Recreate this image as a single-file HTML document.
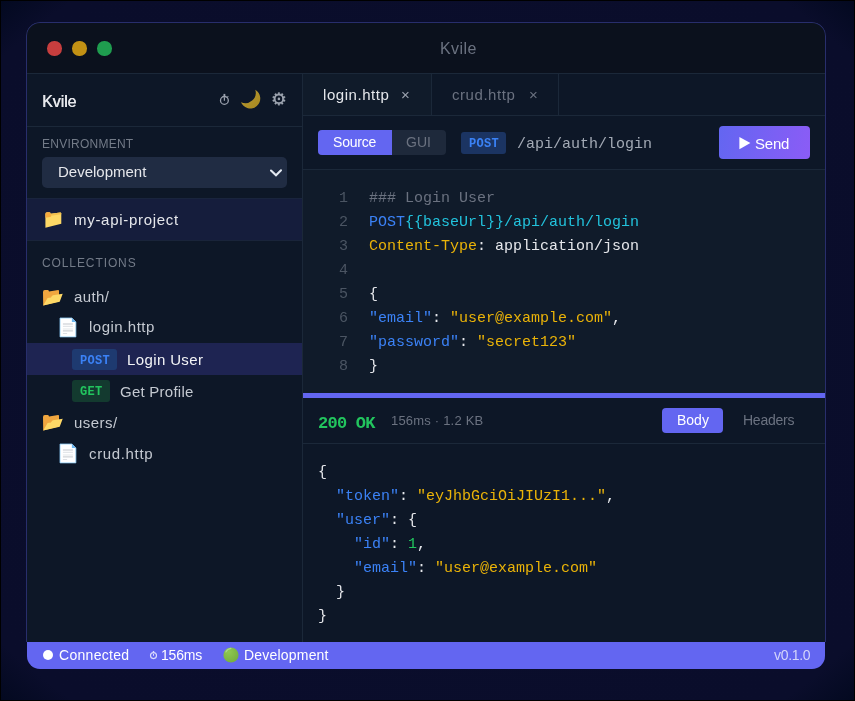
<!DOCTYPE html>
<html><head><meta charset="utf-8">
<style>
*{margin:0;padding:0;box-sizing:border-box}
html,body{width:855px;height:701px;overflow:hidden;background:#000}
body{position:relative;font-family:"Liberation Sans",sans-serif}
#bg{position:absolute;left:1px;top:1px;width:853px;height:699px;background:radial-gradient(ellipse farthest-corner at 50% 50%,#0b0e2c 0%,#0a0d2b 92%,#030920 100%)}
#win{position:absolute;left:26px;top:22px;width:800px;height:648px;border-radius:14px;overflow:hidden}
.r{position:absolute}
.t{position:absolute;white-space:pre;line-height:1;will-change:transform}
</style></head><body>
<div id="bg"></div>
<div id="win">
<div class="r" style="left:0.0px;top:0.0px;width:800.0px;height:51.0px;background:#0b111d;"></div>
<div class="r" style="left:0.0px;top:51.0px;width:800.0px;height:1.0px;background:#1b2839;"></div>
<div class="r" style="left:21.2px;top:19.4px;width:14.4px;height:14.4px;background:#c73e3e;border-radius:50%"></div>
<div class="r" style="left:46.2px;top:19.4px;width:14.4px;height:14.4px;background:#c29114;border-radius:50%"></div>
<div class="r" style="left:71.2px;top:19.4px;width:14.4px;height:14.4px;background:#1f9d4f;border-radius:50%"></div>
<div class="t" style="left:414.3px;top:19.3px;font-size:16px;color:#6b7280;font-family:'Liberation Sans',sans-serif;letter-spacing:0.4px">Kvile</div>
<div class="r" style="left:1.0px;top:52.0px;width:798.0px;height:568.0px;background:#0d1727;"></div>
<div class="r" style="left:277.0px;top:52.0px;width:128.0px;height:41.0px;background:#101b2a;"></div>
<div class="r" style="left:277.0px;top:148.0px;width:522.0px;height:223.0px;background:#101b2a;"></div>
<div class="r" style="left:276.0px;top:52.0px;width:1.0px;height:568.0px;background:#1b2839;"></div>
<div class="r" style="left:0.0px;top:104.0px;width:276.0px;height:1.0px;background:#1b2839;"></div>
<div class="t" style="left:16.0px;top:71.6px;font-size:16px;color:#e5e7eb;font-family:'Liberation Sans',sans-serif;letter-spacing:-0.1px;text-shadow:0.45px 0 0 #e5e7eb">Kvile</div>
<svg class="r" style="left:190px;top:68px" width="16" height="18" viewBox="216 90 16 18"><circle cx="224.4" cy="100.4" r="3.9" fill="none" stroke="#9ca3af" stroke-width="1.3"/><rect x="223.5" y="93.9" width="1.8" height="2.2" fill="#9ca3af"/><line x1="224.4" y1="100.7" x2="224.4" y2="97.3" stroke="#9ca3af" stroke-width="1.2"/><line x1="227.2" y1="97.3" x2="228.3" y2="96.3" stroke="#9ca3af" stroke-width="1.1"/></svg>
<svg class="r" style="left:210px;top:64px" width="30" height="26" viewBox="236 86 30 26"><defs><linearGradient id="mg" x1="0" y1="0" x2="1" y2="1"><stop offset="0" stop-color="#b99b33"/><stop offset="1" stop-color="#a5871f"/></linearGradient></defs><path d="M255.3 90.5 A10 10 0 1 1 241 102.9 A10.4 10.4 0 0 0 255.3 90.5 Z" fill="url(#mg)" transform="translate(0,-0.7)"/></svg>
<svg class="r" style="left:244px;top:68px" width="20" height="20" viewBox="270 90 20 20"><polygon points="277.96,93.99 278.20,92.54 279.60,92.54 279.84,93.99 281.02,94.37 282.07,93.34 283.21,94.17 282.55,95.48 283.28,96.48 284.73,96.27 285.17,97.60 283.86,98.28 283.86,99.52 285.17,100.20 284.73,101.53 283.28,101.32 282.55,102.32 283.21,103.63 282.07,104.46 281.02,103.43 279.84,103.81 279.60,105.26 278.20,105.26 277.96,103.81 276.78,103.43 275.73,104.46 274.59,103.63 275.25,102.32 274.52,101.32 273.07,101.53 272.63,100.20 273.94,99.52 273.94,98.28 272.63,97.60 273.07,96.27 274.52,96.48 275.25,95.48 274.59,94.17 275.73,93.34 276.78,94.37" fill="#9ca3af" stroke="#9ca3af" stroke-width="0.4" stroke-linejoin="round"/><circle cx="278.9" cy="98.9" r="3.3" fill="#0d1727"/><circle cx="278.9" cy="98.9" r="1.3" fill="#9ca3af"/></svg>
<div class="t" style="left:16.0px;top:116.3px;font-size:12px;color:#737b88;font-family:'Liberation Sans',sans-serif;letter-spacing:0.25px">ENVIRONMENT</div>
<div class="r" style="left:16.4px;top:135.2px;width:244.2px;height:30.8px;background:#202c43;border-radius:5px"></div>
<div class="t" style="left:31.8px;top:142.2px;font-size:15px;color:#e5e7eb;font-family:'Liberation Sans',sans-serif">Development</div>
<svg class="r" style="left:240px;top:144px" width="20" height="14" viewBox="240 144 20 14"><polyline points="245,148.5 250,153.3 255,148.3" fill="none" stroke="#e2e8f0" stroke-width="2.1" stroke-linecap="round" stroke-linejoin="miter"/></svg>
<div class="r" style="left:0.0px;top:176.0px;width:276.0px;height:43.0px;background:#151d3c;"></div>
<div class="r" style="left:0.0px;top:176.0px;width:276.0px;height:1.0px;background:#19243d;"></div>
<div class="r" style="left:0.0px;top:218.0px;width:276.0px;height:1.0px;background:#19243a;"></div>
<svg class="r" style="left:17.7px;top:189.3px" width="19" height="18" viewBox="43.7 211.3 19 18"><path d="M45.1 214.4 Q45.1 212.5 46.8 212.5 L49.2 212.5 Q50.3 212.5 50.4 214 L59.8 212.7 Q61 212.6 61 213.8 L61 224.1 L45.1 228 Z" fill="#fdd866"/><path d="M45.1 214.4 Q45.1 212.5 46.8 212.5 L49.2 212.5 Q50.3 212.5 50.4 214 L51 216.5 Q50 217.6 48 217.6 L45.1 218 Z" fill="#f6aa3e"/><path d="M50.4 214 L59.8 212.7 Q61 212.6 61 213.8 L61 214.6 L50.6 216 Z" fill="#f2bf4e"/></svg>
<div class="t" style="left:47.6px;top:189.6px;font-size:15px;color:#e5e7eb;font-family:'Liberation Sans',sans-serif;letter-spacing:0.7px">my-api-project</div>
<div class="t" style="left:16.0px;top:235.2px;font-size:12px;color:#737b88;font-family:'Liberation Sans',sans-serif;letter-spacing:0.9px">COLLECTIONS</div>
<svg class="r" style="left:16.2px;top:266.5px" width="22" height="18" viewBox="42.2 288.5 22 18"><path d="M43.2 291.5 Q43.2 289.5 45 289.5 L48.2 289.5 Q49 289.5 49.2 291.1 L58.3 289.6 Q59.2 289.5 59.2 290.5 L59.2 301 L43.4 305 Z" fill="#f0a63f"/><path d="M47.8 297.4 L51.2 296.9 Q52 295 53.2 294.7 L62.9 293.2 L59.9 301.2 L43.4 305 Z" fill="#fdd866"/></svg>
<div class="t" style="left:48.1px;top:267.2px;font-size:15px;color:#c4c9d1;font-family:'Liberation Sans',sans-serif;letter-spacing:0.4px">auth/</div>
<svg class="r" style="left:33.1px;top:294.5px" width="19" height="22" viewBox="59.1 316.5 19 22"><path d="M60.1 317.5 L72 317.5 L76 321.4 L76 336.4 L60.1 336.4 Z" fill="#ffffff" stroke="#8ccaf5" stroke-width="0.8"/><path d="M72 317.5 L76 321.4 L72 321.4 Z" fill="#6cb6ee"/><rect x="63" y="323" width="10" height="1" fill="#c3c8ce"/><rect x="63" y="325.3" width="10" height="1" fill="#dde0e4"/><rect x="63" y="328.1" width="10" height="0.8" fill="#dde0e4"/><rect x="63" y="329.9" width="10" height="1" fill="#c3c8ce"/><rect x="63" y="332.5" width="4.2" height="1" fill="#dde0e4"/></svg>
<div class="t" style="left:62.7px;top:297.3px;font-size:15px;color:#c4c9d1;font-family:'Liberation Sans',sans-serif;letter-spacing:0.5px">login.http</div>
<div class="r" style="left:0.0px;top:321.0px;width:276.0px;height:32.0px;background:#1e2452;"></div>
<div class="r" style="left:46.2px;top:326.8px;width:44.5px;height:21.2px;background:#1e3a70;border-radius:3px"></div>
<div class="t" style="left:53.9px;top:332.7px;font-size:12px;color:#3b82f6;font-family:'Liberation Mono',monospace;font-weight:700;letter-spacing:0.3px">POST</div>
<div class="t" style="left:101.0px;top:330.1px;font-size:15px;color:#f3f4f6;font-family:'Liberation Sans',sans-serif;letter-spacing:0.38px">Login User</div>
<div class="r" style="left:46.2px;top:358.2px;width:37.6px;height:21.9px;background:#133a2f;border-radius:3px"></div>
<div class="t" style="left:53.9px;top:364.4px;font-size:12px;color:#22c55e;font-family:'Liberation Mono',monospace;font-weight:700;letter-spacing:0.3px">GET</div>
<div class="t" style="left:93.5px;top:362.2px;font-size:15px;color:#c4c9d1;font-family:'Liberation Sans',sans-serif;letter-spacing:0.25px">Get Profile</div>
<svg class="r" style="left:16.2px;top:391.6px" width="22" height="18" viewBox="42.2 288.5 22 18"><path d="M43.2 291.5 Q43.2 289.5 45 289.5 L48.2 289.5 Q49 289.5 49.2 291.1 L58.3 289.6 Q59.2 289.5 59.2 290.5 L59.2 301 L43.4 305 Z" fill="#f0a63f"/><path d="M47.8 297.4 L51.2 296.9 Q52 295 53.2 294.7 L62.9 293.2 L59.9 301.2 L43.4 305 Z" fill="#fdd866"/></svg>
<div class="t" style="left:47.6px;top:393.3px;font-size:15px;color:#c4c9d1;font-family:'Liberation Sans',sans-serif;letter-spacing:0.45px">users/</div>
<svg class="r" style="left:33.1px;top:421.0px" width="19" height="22" viewBox="59.1 316.5 19 22"><path d="M60.1 317.5 L72 317.5 L76 321.4 L76 336.4 L60.1 336.4 Z" fill="#ffffff" stroke="#8ccaf5" stroke-width="0.8"/><path d="M72 317.5 L76 321.4 L72 321.4 Z" fill="#6cb6ee"/><rect x="63" y="323" width="10" height="1" fill="#c3c8ce"/><rect x="63" y="325.3" width="10" height="1" fill="#dde0e4"/><rect x="63" y="328.1" width="10" height="0.8" fill="#dde0e4"/><rect x="63" y="329.9" width="10" height="1" fill="#c3c8ce"/><rect x="63" y="332.5" width="4.2" height="1" fill="#dde0e4"/></svg>
<div class="t" style="left:62.7px;top:424.4px;font-size:15px;color:#c4c9d1;font-family:'Liberation Sans',sans-serif;letter-spacing:0.65px">crud.http</div>
<div class="r" style="left:277.0px;top:93.0px;width:523.0px;height:1.0px;background:#1b2839;"></div>
<div class="r" style="left:405.0px;top:52.0px;width:1.0px;height:41.0px;background:#1b2839;"></div>
<div class="r" style="left:532.0px;top:52.0px;width:1.0px;height:41.0px;background:#1b2839;"></div>
<div class="t" style="left:297.2px;top:65.3px;font-size:15px;color:#e5e7eb;font-family:'Liberation Sans',sans-serif;letter-spacing:0.55px">login.http</div>
<div class="t" style="left:375.2px;top:64.5px;font-size:15px;color:#9ca3af;font-family:'Liberation Sans',sans-serif">×</div>
<div class="t" style="left:426.2px;top:65.3px;font-size:15px;color:#6b7280;font-family:'Liberation Sans',sans-serif;letter-spacing:0.55px">crud.http</div>
<div class="t" style="left:502.6px;top:64.5px;font-size:15px;color:#6b7280;font-family:'Liberation Sans',sans-serif">×</div>
<div class="r" style="left:277.0px;top:147.0px;width:523.0px;height:1.0px;background:#1b2839;"></div>
<div class="r" style="left:292.0px;top:108.0px;width:128.0px;height:25.0px;background:#1e293b;border-radius:4px"></div>
<div class="r" style="left:292.0px;top:108.0px;width:74.0px;height:25.0px;background:#6366f1;border-radius:4px 0 0 4px"></div>
<div class="t" style="left:306.8px;top:113.2px;font-size:14px;color:#ffffff;font-family:'Liberation Sans',sans-serif;letter-spacing:-0.2px">Source</div>
<div class="t" style="left:380.3px;top:113.2px;font-size:14px;color:#6b7280;font-family:'Liberation Sans',sans-serif">GUI</div>
<div class="r" style="left:435.0px;top:110.4px;width:45.0px;height:21.3px;background:#1b3462;border-radius:3px"></div>
<div class="t" style="left:442.8px;top:115.8px;font-size:12px;color:#3b82f6;font-family:'Liberation Mono',monospace;font-weight:700;letter-spacing:0.3px">POST</div>
<div class="t" style="left:490.6px;top:115.3px;font-size:15px;color:#a3aab5;font-family:'Liberation Mono',monospace">/api/auth/login</div>
<div class="r" style="left:693.0px;top:104.0px;width:91.0px;height:33.0px;background:linear-gradient(100deg,#6366f1,#8b5cf6);border-radius:4px"></div>
<svg class="r" style="left:712px;top:112px" width="14" height="16" viewBox="738 134 14 16"><path d="M739.4 137 L750.4 143.1 L739.4 149.2 Z" fill="#ffffff"/></svg>
<div class="t" style="left:729.2px;top:113.5px;font-size:15px;color:#ffffff;font-family:'Liberation Sans',sans-serif;letter-spacing:-0.2px">Send</div>
<div class="t" style="left:313.0px;top:168.7px;font-size:15px;color:#4b5563;font-family:'Liberation Mono',monospace">1</div>
<div class="t" style="left:343.0px;top:168.7px;font-size:15px;color:#e5e7eb;font-family:'Liberation Mono',monospace"><span style="color:#6b7280">### Login User</span></div>
<div class="t" style="left:313.0px;top:192.7px;font-size:15px;color:#4b5563;font-family:'Liberation Mono',monospace">2</div>
<div class="t" style="left:343.0px;top:192.7px;font-size:15px;color:#e5e7eb;font-family:'Liberation Mono',monospace"><span style="color:#3b82f6">POST</span><span style="color:#22c3dd">{{baseUrl}}/api/auth/login</span></div>
<div class="t" style="left:313.0px;top:216.7px;font-size:15px;color:#4b5563;font-family:'Liberation Mono',monospace">3</div>
<div class="t" style="left:343.0px;top:216.7px;font-size:15px;color:#e5e7eb;font-family:'Liberation Mono',monospace"><span style="color:#eab308">Content-Type</span><span style="color:#e5e7eb">: application/json</span></div>
<div class="t" style="left:313.0px;top:240.7px;font-size:15px;color:#4b5563;font-family:'Liberation Mono',monospace">4</div>
<div class="t" style="left:343.0px;top:240.7px;font-size:15px;color:#e5e7eb;font-family:'Liberation Mono',monospace"></div>
<div class="t" style="left:313.0px;top:264.7px;font-size:15px;color:#4b5563;font-family:'Liberation Mono',monospace">5</div>
<div class="t" style="left:343.0px;top:264.7px;font-size:15px;color:#e5e7eb;font-family:'Liberation Mono',monospace"><span style="color:#e5e7eb">{</span></div>
<div class="t" style="left:313.0px;top:288.7px;font-size:15px;color:#4b5563;font-family:'Liberation Mono',monospace">6</div>
<div class="t" style="left:343.0px;top:288.7px;font-size:15px;color:#e5e7eb;font-family:'Liberation Mono',monospace"><span style="color:#3b82f6">"email"</span><span style="color:#e5e7eb">: </span><span style="color:#eab308">"user@example.com"</span><span style="color:#e5e7eb">,</span></div>
<div class="t" style="left:313.0px;top:312.7px;font-size:15px;color:#4b5563;font-family:'Liberation Mono',monospace">7</div>
<div class="t" style="left:343.0px;top:312.7px;font-size:15px;color:#e5e7eb;font-family:'Liberation Mono',monospace"><span style="color:#3b82f6">"password"</span><span style="color:#e5e7eb">: </span><span style="color:#eab308">"secret123"</span></div>
<div class="t" style="left:313.0px;top:336.7px;font-size:15px;color:#4b5563;font-family:'Liberation Mono',monospace">8</div>
<div class="t" style="left:343.0px;top:336.7px;font-size:15px;color:#e5e7eb;font-family:'Liberation Mono',monospace"><span style="color:#e5e7eb">}</span></div>
<div class="r" style="left:277.0px;top:371.0px;width:523.0px;height:5.0px;background:#6366f1;"></div>
<div class="t" style="left:292.3px;top:392.8px;font-size:17px;color:#22c55e;font-family:'Liberation Mono',monospace;font-weight:700;letter-spacing:-0.75px">200 OK</div>
<div class="t" style="left:365.2px;top:391.6px;font-size:13px;color:#6b7280;font-family:'Liberation Sans',sans-serif;letter-spacing:0.2px">156ms · 1.2 KB</div>
<div class="r" style="left:636.2px;top:386.0px;width:60.8px;height:25.3px;background:#6366f1;border-radius:4px"></div>
<div class="t" style="left:650.5px;top:391.1px;font-size:14px;color:#ffffff;font-family:'Liberation Sans',sans-serif">Body</div>
<div class="t" style="left:717.1px;top:391.1px;font-size:14px;color:#6b7280;font-family:'Liberation Sans',sans-serif;letter-spacing:-0.25px">Headers</div>
<div class="r" style="left:277.0px;top:421.0px;width:523.0px;height:1.0px;background:#1b2839;"></div>
<div class="t" style="left:291.6px;top:442.5px;font-size:15px;color:#e5e7eb;font-family:'Liberation Mono',monospace"><span style="color:#e5e7eb">{</span></div>
<div class="t" style="left:291.6px;top:466.5px;font-size:15px;color:#e5e7eb;font-family:'Liberation Mono',monospace"><span style="color:#e5e7eb">  </span><span style="color:#3b82f6">"token"</span><span style="color:#e5e7eb">: </span><span style="color:#eab308">"eyJhbGciOiJIUzI1..."</span><span style="color:#e5e7eb">,</span></div>
<div class="t" style="left:291.6px;top:490.5px;font-size:15px;color:#e5e7eb;font-family:'Liberation Mono',monospace"><span style="color:#e5e7eb">  </span><span style="color:#3b82f6">"user"</span><span style="color:#e5e7eb">: {</span></div>
<div class="t" style="left:291.6px;top:514.5px;font-size:15px;color:#e5e7eb;font-family:'Liberation Mono',monospace"><span style="color:#e5e7eb">    </span><span style="color:#3b82f6">"id"</span><span style="color:#e5e7eb">: </span><span style="color:#22c55e">1</span><span style="color:#e5e7eb">,</span></div>
<div class="t" style="left:291.6px;top:538.5px;font-size:15px;color:#e5e7eb;font-family:'Liberation Mono',monospace"><span style="color:#e5e7eb">    </span><span style="color:#3b82f6">"email"</span><span style="color:#e5e7eb">: </span><span style="color:#eab308">"user@example.com"</span></div>
<div class="t" style="left:291.6px;top:562.5px;font-size:15px;color:#e5e7eb;font-family:'Liberation Mono',monospace"><span style="color:#e5e7eb">  }</span></div>
<div class="t" style="left:291.6px;top:586.5px;font-size:15px;color:#e5e7eb;font-family:'Liberation Mono',monospace"><span style="color:#e5e7eb">}</span></div>
<div class="r" style="left:0;top:0;width:800px;height:620px;border:1px solid #282e6c;border-bottom:none;border-radius:14px 14px 0 0"></div>
<div class="r" style="left:1px;top:620px;width:798px;height:27px;background:#6366f1;border-radius:0 0 13px 13px"></div>
<div class="r" style="left:17.0px;top:628.1px;width:10.3px;height:10.3px;background:#ffffff;border-radius:50%"></div>
<div class="t" style="left:32.5px;top:625.9px;font-size:14px;color:#ffffff;font-family:'Liberation Sans',sans-serif;letter-spacing:0.3px">Connected</div>
<svg class="r" style="left:122px;top:627px" width="10" height="12" viewBox="149 649 10 12"><circle cx="154.5" cy="655.6" r="3.0" fill="none" stroke="#dcdcfc" stroke-width="1.15"/><rect x="153.8" y="651" width="1.4" height="1.2" fill="#dcdcfc"/><line x1="154.5" y1="655.8" x2="154.5" y2="653.8" stroke="#dcdcfc" stroke-width="1"/></svg>
<div class="t" style="left:135.0px;top:625.9px;font-size:14px;color:#ffffff;font-family:'Liberation Sans',sans-serif;letter-spacing:-0.2px">156ms</div>
<svg class="r" style="left:196px;top:624px" width="18" height="18" viewBox="222.6 646.6 18 18"><defs><radialGradient id="gg" cx="0.35" cy="0.3" r="0.8"><stop offset="0" stop-color="#8fc850"/><stop offset="1" stop-color="#74ad3e"/></radialGradient></defs><circle cx="231.6" cy="655.6" r="7.6" fill="url(#gg)"/><path d="M226.5 652.5 Q228 649.5 231.5 649" stroke="#a9d68a" stroke-width="1.2" fill="none" stroke-linecap="round"/></svg>
<div class="t" style="left:218.3px;top:625.9px;font-size:14px;color:#ffffff;font-family:'Liberation Sans',sans-serif;letter-spacing:0.2px">Development</div>
<div class="t" style="left:747.5px;top:626.0px;font-size:14px;color:#d4d5fb;font-family:'Liberation Sans',sans-serif;letter-spacing:-0.3px">v0.1.0</div>
</div>
</body></html>
